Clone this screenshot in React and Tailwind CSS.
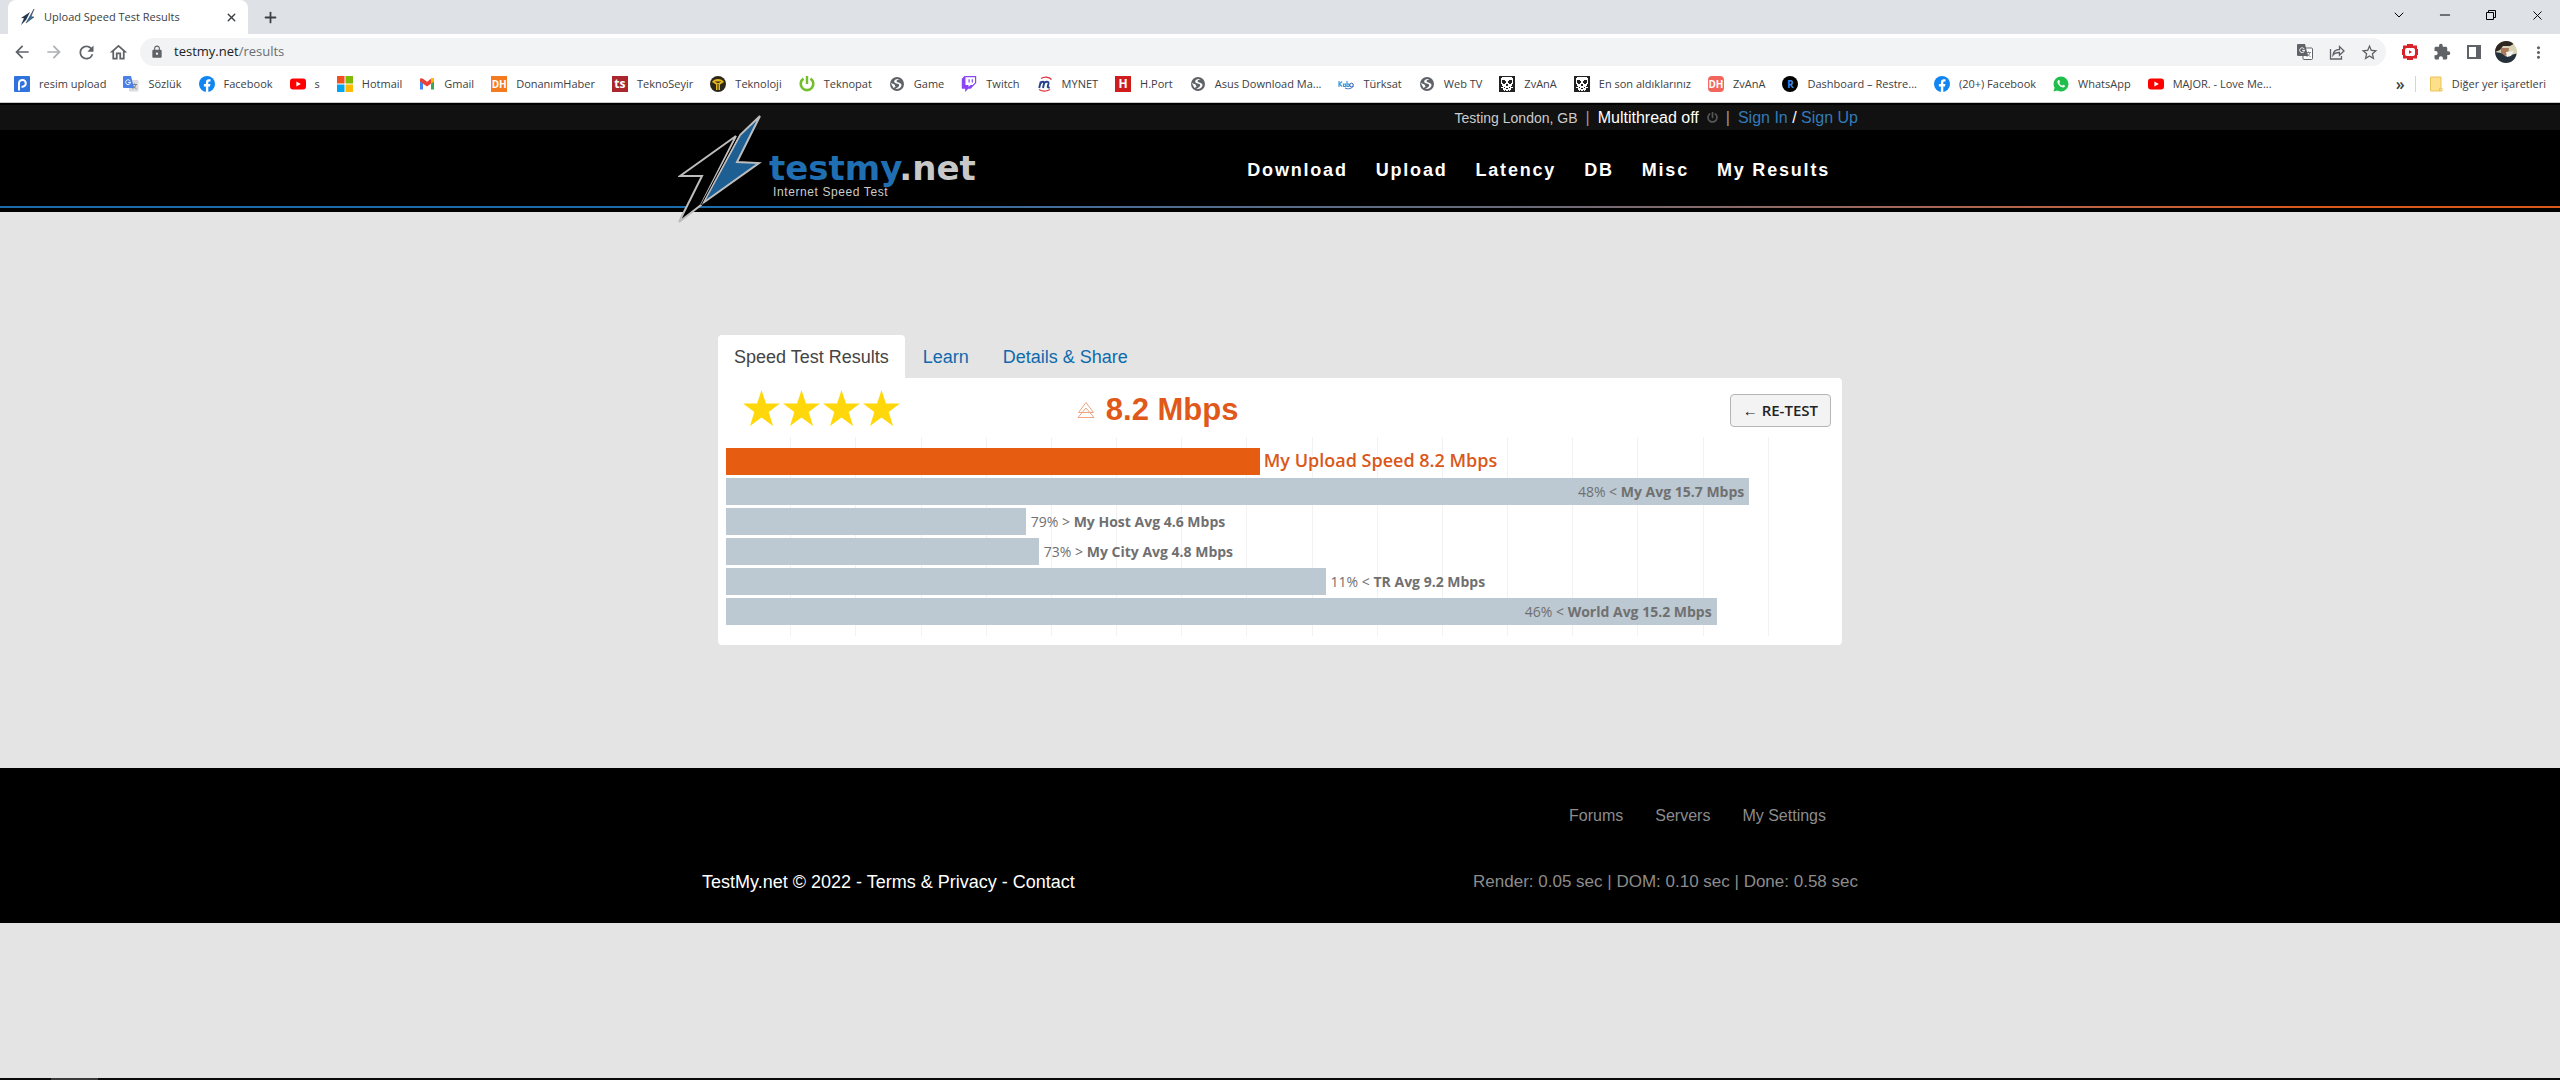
import React from "react";
import { X, Plus, ChevronDown, Minus } from "lucide-react";
import { FaPowerOff } from "react-icons/fa";
import { MdExtension, MdLock, MdOutlineStarBorder, MdMoreVert, MdArrowBack, MdArrowForward, MdRefresh, MdOutlineHome } from "react-icons/md";

const Tile = ({ className, children }) => (
  <span className={"flex size-4 shrink-0 items-center justify-center font-bold leading-none " + className}>{children}</span>
);

const Globe = () => (
  <svg viewBox="0 0 16 16" className="size-4">
    <circle cx="8" cy="8" r="7" fill="#5f6368" />
    <path d="M10.500 3.300C8 2.600 5 3.500 5.200 5.800c.2 2 4.600 1.300 5 3.200.3 1.500-1.500 2.800-4 3.800 3 .6 6-.9 6.300-3.600.2-2.800-4.500-2.400-5-4 0-1 1.500-1.700 3-1.900z" fill="#fff" />
    <path d="M1.800 7l3.700 1.600 1 2.200-2 1.200z" fill="#fff" />
  </svg>
);

const Facebook = () => (
  <svg viewBox="0 0 16 16" className="size-4">
    <circle cx="8" cy="8" r="8" fill="#1186f2" />
    <path d="M6.900 16v-5.500H4.900V8.100h2V6.400c0-2 1.200-3.100 3-3.100.9 0 1.600.1 1.600.1v2h-1c-1 0-1.200.6-1.200 1.200v1.500h2.100l-.4 2.400H9.300V16z" fill="#fff" />
  </svg>
);

const YouTube = () => (
  <svg viewBox="0 0 16 16" className="size-4">
    <rect y="2.500" width="16" height="11" rx="3" fill="#f00" />
    <path d="m6.400 5.500 4.400 2.500-4.400 2.500z" fill="#fff" />
  </svg>
);

const Skull = () => (
  <svg viewBox="0 0 16 16" className="size-4">
    <rect width="16" height="16" fill="#222" />
    <path d="M3 1h10v1h1v6h-1v2h-1v1h2v1h-2v2h-1v1h-1v-1H9v1H7v-1H6v1H5v-1H4v-2H2v-1h2v-1H3V8H2V2h1z" fill="#fff" />
    <path d="M3 4h3v1h1v2H6v1H4V7H3zM10 4h3v3h-1v1h-2V7H9V5h1zM7 8h2v2H7zM5 11h1v1H5zM7 12h2v1H7zM10 11h1v1h-1z" fill="#222" />
  </svg>
);

const Translate = ({ gray }) => (
  <svg viewBox="0 0 16 16" className="size-4">
    <rect x="6" y="4" width="9.500" height="11.500" rx="1" fill={gray ? "#fff" : "#d9dce0"} stroke={gray ? "#5f6368" : "none"} />
    <path d="M9 8.500h5M11.500 7.500v1M13 8.500c-.5 2-2 3.500-3.500 4.200M10 9.500c.8 1.500 2 2.500 3.500 3.200" stroke="#6b7078" strokeWidth=".8" fill="none" />
    <path d="M1 0h7l3 12H1a1 1 0 0 1-1-1V1a1 1 0 0 1 1-1z" fill={gray ? "#5f6368" : "#4a80e8"} />
    <path d="M7.300 5.200A2.400 2.400 0 1 0 7.500 6.400H5.200" stroke="#fff" strokeWidth="1" fill="none" />
  </svg>
);

const Microsoft = () => (
  <svg viewBox="0 0 16 16" className="size-4">
    <path d="M0 0h7.500v7.500H0z" fill="#f35022" />
    <path d="M8.500 0H16v7.500H8.500z" fill="#80bb03" />
    <path d="M0 8.500h7.500V16H0z" fill="#03a5f0" />
    <path d="M8.500 8.500H16V16H8.500z" fill="#ffb903" />
  </svg>
);

const Gmail = () => (
  <svg viewBox="0 0 16 16" className="size-4">
    <path d="M1 3v10.500h3V5z" fill="#4285f4" />
    <path d="M15 3v10.500h-3V5z" fill="#34a853" />
    <path d="M1 3.500C1 2 2.800 1.800 4 2.700l4 3.100 4-3.100c1.200-.9 3-.7 3 .8v2L8 10.500l-7-5z" fill="#ea4335" />
    <path d="m12 2.700 1-.6c1 0 2 .6 2 1.400v2l-3 2.200z" fill="#fbbc04" />
  </svg>
);

const Teknoloji = () => (
  <svg viewBox="0 0 16 16" className="size-4">
    <circle cx="8" cy="8" r="8" fill="#2b2719" />
    <path d="M2 6C4 2 12 2 14 6l-4 2.500V14H6V8.500z" fill="#e3b71d" />
    <path d="M4.500 5.500h7L8 7.200zM7.500 8h1v6h-1z" fill="#2b2719" />
  </svg>
);

const Power = () => (
  <svg viewBox="0 0 16 16" className="size-4">
    <path d="M4.500 2.600a6.300 6.300 0 1 0 7 0" stroke="#72bf2b" strokeWidth="2.600" fill="none" />
    <path d="M8 0v8" stroke="#72bf2b" strokeWidth="2.400" />
  </svg>
);

const Twitch = () => (
  <svg viewBox="0 0 16 16" className="size-4">
    <path d="M3.500 0 .8 2.800v10h3.400V16l3-3.200h2.500L15.200 7V0z" fill="#8c44f7" />
    <path d="M4.500 1.200H14v5.400l-2.300 2.300H9.500l-2 2v-2h-3z" fill="#fff" />
    <path d="M7.500 3.200h1.200v3.300H7.500zm3.200 0h1.200v3.300h-1.200z" fill="#8c44f7" />
  </svg>
);

const Mynet = () => (
  <svg viewBox="0 0 16 16" className="size-4">
    <path d="M4 2.500C7 .5 12 .5 14.500 3.500M13 13.500c-3.500 2-8 2-11 0" stroke="#e0303a" strokeWidth="1.200" fill="none" />
    <path d="M2.200 12 3.800 5.500M3.500 7.500c1.500-2.500 4-2 3.500 0l-1 4.500M7 7.500c1.500-2.500 5-2.300 4.500 0l-.8 3c-.2 1 .8 1.300 2 .8" stroke="#24418f" strokeWidth="1.900" fill="none" />
  </svg>
);

const Kablo = () => (
  <svg viewBox="0 0 16 16" className="size-4">
    <path d="M1 5v6M4 5.500 1.500 8 4 10.500M5.500 8h2v2.500h-2zM9 5v5.500h2V8H9" stroke="#3c9bd8" strokeWidth="1.200" fill="none" />
    <circle cx="13.500" cy="9" r="1.800" stroke="#3759b5" fill="none" />
    <path d="M7 12c3 1.500 7 .5 8.500-2" stroke="#3c6fc4" fill="none" />
  </svg>
);

const WhatsApp = () => (
  <svg viewBox="0 0 16 16" className="size-4">
    <path d="M8 .5A7.500 7.500 0 0 1 8 15.500a7.500 7.500 0 0 1-3.600-.9L.5 15.600l1.100-3.800A7.500 7.500 0 0 1 8 .5z" fill="#20bf4b" />
    <path d="M5.200 4.200c-1.400 1-1 3 .9 5s4.400 3 5.600 1.600c.6-.9.200-1.300-.4-1.600l-1.100-.5-.9 1c-1.400-.5-2.500-1.600-3-2.800l.7-.9-.5-1.500c-.3-.5-.9-.5-1.300-.3z" fill="#fff" />
  </svg>
);

const Folder = () => (
  <svg viewBox="0 0 16 16" className="size-4">
    <path d="M2.500 1H13v10.500l1 1V15H2.500z" fill="#ffe08a" stroke="#e9c35a" />
    <path d="M11.500 15v-2.500h1.500" fill="none" stroke="#e9c35a" />
  </svg>
);

const Upload = () => (
  <svg viewBox="0 0 16 16" className="size-4">
    <rect width="16" height="16" rx="1" fill="#3173dd" />
    <path d="M5 14.500V7a3.400 3.400 0 1 1 2.500 3.600" stroke="#fff" strokeWidth="2" fill="none" />
  </svg>
);

const bookmarks = [
  ["resim upload", <Upload />],
  ["Sözlük", <Translate />],
  ["Facebook", <Facebook />],
  ["s", <YouTube />],
  ["Hotmail", <Microsoft />],
  ["Gmail", <Gmail />],
  ["DonanımHaber", <Tile className="bg-[#f47a20] text-[10px] text-white">DH</Tile>],
  ["TeknoSeyir", <Tile className="bg-[#a8262c] text-xs text-white">ts</Tile>],
  ["Teknoloji", <Teknoloji />],
  ["Teknopat", <Power />],
  ["Game", <Globe />],
  ["Twitch", <Twitch />],
  ["MYNET", <Mynet />],
  ["H.Port", <Tile className="bg-[#cf1d1d] text-xs text-white">H</Tile>],
  ["Asus Download Ma...", <Globe />],
  ["Türksat", <Kablo />],
  ["Web TV", <Globe />],
  ["ZvAnA", <Skull />],
  ["En son aldıklarınız", <Skull />],
  ["ZvAnA", <Tile className="rounded-sm bg-[#f2655c] text-[10px] text-white">DH</Tile>],
  ["Dashboard – Restre...", <Tile className="rounded-full bg-black text-[10px] text-[#3c8be8]">R</Tile>],
  ["(20+) Facebook", <Facebook />],
  ["WhatsApp", <WhatsApp />],
  ["MAJOR. - Love Me...", <YouTube />],
];

const Bolt = ({ className }) => (
  <svg viewBox="0 0 84 109" className={className}>
    <path d="M58 21 2 61h22L1 107l22-17z" fill="#000" stroke="#bdbdbd" strokeWidth="2" />
    <path d="M82 1 62 20 25 88l56-40-22-1z" fill="#1e5f93" stroke="#bdbdbd" strokeWidth="2" />
    <path d="M61 19 23 90" stroke="#000" strokeWidth="1" />
  </svg>
);

function BrowserChrome() {
  const icon = "flex size-8 items-center justify-center text-[#5f6368]";
  return (
    <header className="bg-white font-['Open_Sans',sans-serif] text-[11px] text-[#3c4043]">
      <div className="flex h-[34px] items-end bg-[#dee1e6] pl-2">
        <div className="flex h-[34px] w-60 items-center rounded-t-lg bg-white pr-2.5 pl-3">
          <svg viewBox="0 0 16 16" className="size-4">
            <path d="M10 3 1 9l3 .2L1 16l5-5z" fill="#26364a" />
            <path d="M14 0 6 14l8-6-3-.3z" fill="#2f6ea8" stroke="#333" strokeWidth=".5" />
          </svg>
          <span className="ml-2 flex-1">Upload Speed Test Results</span>
          <button aria-label="Close tab"><X size={13} strokeWidth={2.5} /></button>
        </div>
        <button aria-label="New tab" className="flex h-[34px] w-11 items-center justify-center"><Plus size={17} strokeWidth={2.5} /></button>
        <div className="ml-auto flex h-[34px] items-center pb-1 text-black">
          <button aria-label="Search tabs" className="flex w-[46px] justify-center"><ChevronDown size={16} strokeWidth={1.5} /></button>
          <button aria-label="Minimize" className="flex w-[46px] justify-center"><Minus size={16} strokeWidth={1.5} /></button>
          <button aria-label="Restore" className="flex w-[46px] justify-center">
            <svg viewBox="0 0 10 10" className="size-2.5" fill="none" stroke="currentColor"><path d="M.5 2.500h7v7h-7zM2.500 2.500v-2h7v7h-2" /></svg>
          </button>
          <button aria-label="Close" className="flex w-[46px] justify-center"><X size={15} strokeWidth={1.5} /></button>
        </div>
      </div>
      <div className="flex h-9 items-center px-1.5">
        <button aria-label="Back" className={icon}><MdArrowBack size={20} /></button>
        <button aria-label="Forward" className={icon + " opacity-50"}><MdArrowForward size={20} /></button>
        <button aria-label="Reload" className={icon}><MdRefresh size={21} /></button>
        <button aria-label="Home" className={icon}><MdOutlineHome size={21} /></button>
        <div className="mr-2 ml-1.5 flex h-7 flex-1 items-center rounded-full bg-[#f1f3f4] pr-px pl-2.5">
          <MdLock size={14} className="text-[#5f6368]" />
          <div className="ml-2.5 flex-1 text-[13px]"><span className="text-[#202124]">testmy.net</span><span className="text-[#6a6e73]">/results</span></div>
          <button aria-label="Translate" className={icon}><Translate gray /></button>
          <button aria-label="Share" className={icon}>
            <svg viewBox="0 0 16 16" className="size-4" fill="none" stroke="currentColor" strokeWidth="1.300"><path d="M1.500 5v10h11v-3M4 11c.5-4 3-5.500 6.500-5.500V2.500L15 7l-4.500 4.300V8.500C7.500 8.500 5.500 9 4 11z" /></svg>
          </button>
          <button aria-label="Bookmark" className={icon}><MdOutlineStarBorder size={19} /></button>
        </div>
        <button aria-label="Video extension" className={icon}>
          <svg viewBox="0 0 16 16" className="size-4"><path d="M5 0h6v1.500h4V5h1v6h-1v3.500h-4V16H5v-1.500H1V11H0V5h1V1.500h4z" fill="#d8232a" /><rect x="3" y="4" width="10" height="8" rx="2" fill="#fff" /><path d="m7 6.200 3 1.800-3 1.800z" fill="#d8232a" /></svg>
        </button>
        <button aria-label="Extensions" className={icon}><MdExtension size={18} /></button>
        <button aria-label="Side panel" className={icon}>
          <svg viewBox="0 0 14 14" className="size-3.5"><path d="M0 0h14v14H0z M2 2v10h7V2z" fill="currentColor" fillRule="evenodd" /></svg>
        </button>
        <button aria-label="Profile" className={icon}>
          <svg viewBox="0 0 22 22" className="size-[22px]">
            <circle cx="11" cy="11" r="11" fill="#d8d3b4" />
            <path d="M2.500 4C7-1 15-1 18.500 3L15 5 8 5 5 9 0 11C0 8 1 6 2.500 4z" fill="#2e2620" />
            <path d="M6 7h8l-1 6-3 2-4-3z" fill="#a8795c" />
            <path d="M0 11l6 1 5 3.500 10.500-3C21 18 16.500 22 11 22S.500 18 0 11z" fill="#24313c" />
            <path d="m11 11 8-1-3 5-4 1z" fill="#f4f2ea" />
          </svg>
        </button>
        <button aria-label="Menu" className={icon}><MdMoreVert size={19} /></button>
      </div>
      <div className="flex h-[33px] items-center border-b border-[#c8c8c8] px-3.5 pb-1">
        <nav className="flex flex-1 items-center gap-[17px] whitespace-nowrap">
          {bookmarks.map(([label, glyph], i) => (
            <a key={i} href="#" className="flex items-center gap-[9px]">{glyph}{label}</a>
          ))}
        </nav>
        <button aria-label="More bookmarks" className="mr-2.5 text-base leading-none font-semibold">»</button>
        <button className="flex items-center gap-2 border-l border-gray-300 pl-3"><Folder />Diğer yer işaretleri</button>
      </div>
    </header>
  );
}

const navItems = ["Download", "Upload", "Latency", "DB", "Misc", "My Results"];

function SiteHeader() {
  return (
    <header className="bg-black">
      <div className="h-[27px] border-t-2 border-black bg-[#111]">
        <div className="mx-auto flex h-full max-w-[1156px] items-center justify-end gap-2 text-base text-white">
          <span className="text-sm text-[#ccc]">Testing London, GB</span>
          <span className="text-[#999]">|</span>
          <a href="#">Multithread off</a>
          <FaPowerOff size={11} className="text-[#555]" />
          <span className="text-[#999]">|</span>
          <span><a href="#" className="text-[#337ab7]">Sign In</a> / <a href="#" className="text-[#337ab7]">Sign Up</a></span>
        </div>
      </div>
      <div className="mx-auto flex h-[76px] max-w-[1156px] items-center justify-between">
        <div className="relative pt-4 pl-[67px]">
          <Bolt className="absolute -top-[21px] -left-[24px] h-[109px] w-[84px]" />
          <div className="font-['DejaVu_Sans',sans-serif] text-[34px] leading-8 font-bold text-[#1f6fb2]">testmy<span className="text-[#c8c8c8]">.net</span></div>
          <div className="pl-1 text-xs leading-4 tracking-wider text-[#ccc]">Internet Speed Test</div>
        </div>
        <nav className="flex pt-1 pr-3.5 text-lg font-bold tracking-widest text-white">
          {navItems.map((item) => <a key={item} href="#" className="px-3.5">{item}</a>)}
        </nav>
      </div>
      <div className="h-0.5 bg-gradient-to-r from-[#1c6cab] from-30% via-[#6b6b78] via-60% to-[#d9581a] to-90%" />
      <div className="h-1" />
    </header>
  );
}

const bars = [
  { mbps: 15.7, pct: "48% <", label: "My Avg 15.7 Mbps", inside: true },
  { mbps: 4.6, pct: "79% >", label: "My Host Avg 4.6 Mbps" },
  { mbps: 4.8, pct: "73% >", label: "My City Avg 4.8 Mbps" },
  { mbps: 9.2, pct: "11% <", label: "TR Avg 9.2 Mbps" },
  { mbps: 15.2, pct: "46% <", label: "World Avg 15.2 Mbps", inside: true },
];
const AXIS_MAX = 17;

function Chart() {
  return (
    <div className="relative mx-2 py-[11px] font-['Open_Sans',sans-serif] text-sm whitespace-nowrap text-[#707070]">
      <div className="absolute inset-0 grid grid-cols-17">
        {Array.from({ length: AXIS_MAX }, (_, i) => (
          <div key={i} className="border-r border-[#f2f2f2] last:border-0" />
        ))}
      </div>
      <div className="relative flex flex-col gap-[3px]">
        <div className="flex h-[27px] items-center">
          <div className="h-[27px] bg-[#e65c11]" style={{ width: `${(8.19 / AXIS_MAX) * 100}%` }} />
          <span className="pb-1 pl-1 text-lg leading-6 font-semibold text-[#d9581a]">My Upload Speed 8.2 Mbps</span>
        </div>
        {bars.map((b) => (
          <div key={b.label} className="flex items-center">
            <div className="flex h-[27px] items-center justify-end bg-[#bcc8d2] pr-[5px]" style={{ width: `${(b.mbps / AXIS_MAX) * 100}%` }}>
              {b.inside && <span>{b.pct} <b className="font-bold">{b.label}</b></span>}
            </div>
            {!b.inside && <span className="pl-[5px]">{b.pct} <b className="font-bold">{b.label}</b></span>}
          </div>
        ))}
      </div>
    </div>
  );
}

function Results() {
  return (
    <main className="mx-auto w-full max-w-[1156px] px-4 py-[123px]">
      <div role="tablist" className="flex h-[43px] text-lg text-[#0d6aad]">
        <button role="tab" aria-selected="true" className="rounded-t-sm bg-white px-4 text-[#444]">Speed Test Results</button>
        <button role="tab" aria-selected="false" className="px-[18px]">Learn</button>
        <button role="tab" aria-selected="false" className="px-4">Details &amp; Share</button>
      </div>
      <section className="rounded-r-sm rounded-b-sm bg-white pb-[9px]">
        <div className="grid h-[59px] grid-cols-[25%_29%_1fr] items-center pr-[11px]">
          <div className="flex gap-[3px] pl-[25px] text-[#ffd70a]" role="img" aria-label="4 stars">
            {[0, 1, 2, 3].map((i) => (
              <svg key={i} viewBox="0 0 37 36" className="h-9 w-[37px]" fill="currentColor">
                <path d="M18.500 0l4.400 13.400H37L25.700 21.900 30 36l-11.500-8.600L7 36l4.300-14.100L0 13.400h14.100z" />
              </svg>
            ))}
          </div>
          <div className="flex items-center justify-center gap-[11px] pt-1 text-[#e0591a]">
            <svg viewBox="0 0 18 16" className="h-4 w-[18px]" fill="none" stroke="#eda582">
              <path d="m9 .5 7.500 10h-15zM9 6l8 9.500H1z" />
            </svg>
            <strong className="text-[31px] leading-9 whitespace-nowrap">8.2 Mbps</strong>
          </div>
          <button className="mt-1.5 h-[33px] justify-self-end rounded-sm border border-[#b5b5b5] bg-[#f3f3f3] px-3 font-['Open_Sans',sans-serif] text-[15px] font-semibold whitespace-nowrap text-[#222]">← RE-TEST</button>
        </div>
        <Chart />
      </section>
    </main>
  );
}

function SiteFooter() {
  return (
    <footer className="bg-black">
      <div className="mx-auto max-w-[1156px] pt-9 pb-7 text-[17px] text-[#8c8c8c]">
        <nav className="flex justify-end pr-4 text-base">
          {["Forums", "Servers", "My Settings"].map((t) => <a key={t} href="#" className="px-4">{t}</a>)}
        </nav>
        <div className="mt-[41px] flex items-center justify-between">
          <div className="text-lg leading-[26px] text-white">TestMy.net © 2022 - <a href="#">Terms &amp; Privacy</a> - <a href="#">Contact</a></div>
          <div>Render: 0.05 sec | DOM: 0.10 sec | Done: 0.58 sec</div>
        </div>
      </div>
    </footer>
  );
}

export default function App() {
  return (
    <div className="flex min-h-screen flex-col bg-[#e4e4e4] font-['Liberation_Sans',Arial,sans-serif]">
      <BrowserChrome />
      <SiteHeader />
      <Results />
      <SiteFooter />
      <div className="mt-auto h-0.5 bg-[#0a0a0a]"><div className="ml-[51px] h-0.5 w-[47px] bg-[#3a3a3a]" /></div>
    </div>
  );
}
